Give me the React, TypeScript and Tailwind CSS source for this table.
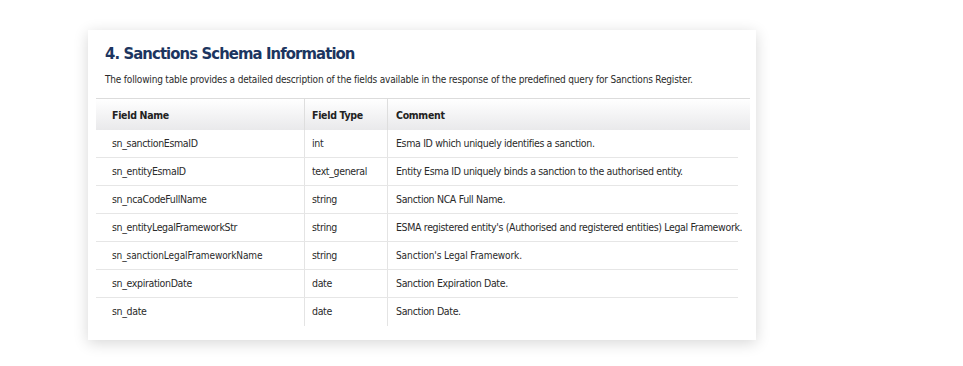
import React from 'react';

type Field = { name: string; type: string; comment: string; small?: boolean };

const FIELDS: Field[] = [
  { name: 'sn_sanctionEsmaID', type: 'int', comment: 'Esma ID which uniquely identifies a sanction.' },
  { name: 'sn_entityEsmaID', type: 'text_general', comment: 'Entity Esma ID uniquely binds a sanction to the authorised entity.' },
  { name: 'sn_ncaCodeFullName', type: 'string', comment: 'Sanction NCA Full Name.' },
  { name: 'sn_entityLegalFrameworkStr', type: 'string', comment: "ESMA registered entity's (Authorised and registered entities) Legal Framework." },
  { name: 'sn_sanctionLegalFrameworkName', type: 'string', comment: "Sanction's Legal Framework.", small: true },
  { name: 'sn_expirationDate', type: 'date', comment: 'Sanction Expiration Date.' },
  { name: 'sn_date', type: 'date', comment: 'Sanction Date.' },
];

const FONT = "font-['DejaVu_Sans_Condensed','DejaVu_Sans',sans-serif]";

export default function App() {
  return (
    <div className={`w-[963px] h-[366px] bg-white pt-[30px] pl-[88px] ${FONT}`}>
      {/* card */}
      <div className="w-[668px] h-[310px] bg-white shadow-[0_3px_14px_rgba(0,0,0,0.16)] pt-[12px]">
        <h2 className="pl-[17px] text-[16.5px] leading-[24px] font-bold tracking-[-0.9px] text-[#1c3560]">
          4. Sanctions Schema Information
        </h2>
        <p className="pl-[17px] mt-[7px] text-[10px] leading-[14px] text-[#2a2a2a] tracking-[-0.18px]">
          The following table provides a detailed description of the fields available in the response of the predefined query for Sanctions Register.
        </p>

        <div className="ml-[8px] mt-[11px] w-[654px]">
          {/* header */}
          <div className="grid grid-cols-[208px_83px_1fr] h-[32px] border-t border-[#dcdcdc] bg-gradient-to-b from-white to-[#e9e9eb] text-[10.5px] font-bold tracking-[-0.3px] text-[#222]">
            <div className="flex items-center pl-[16px] pt-[2px]">Field Name</div>
            <div className="flex items-center pl-[7px] pt-[2px] border-l border-[#dedede]">Field Type</div>
            <div className="flex items-center pl-[8px] pt-[2px] border-l border-[#dedede]">Comment</div>
          </div>

          {/* rows */}
          <div className="w-[642px]">
            {FIELDS.map((f, i) => (
              <div
                key={f.name}
                className={`grid grid-cols-[208px_83px_1fr] h-[28px] text-[10.5px] tracking-[-0.35px] text-[#2a2a2a] whitespace-nowrap ${i < FIELDS.length - 1 ? 'border-b border-[#e6e6e6]' : ''}`}
              >
                <div className={`flex items-center pl-[16px] ${f.small ? 'text-[10px] tracking-[-0.1px]' : ''}`}>{f.name}</div>
                <div className="flex items-center pl-[7px] border-l border-[#e4e4e4]">{f.type}</div>
                <div className={`flex items-center pl-[8px] border-l border-[#e4e4e4] ${f.small ? 'text-[10px] tracking-[-0.1px]' : ''}`}>{f.comment}</div>
              </div>
            ))}
          </div>
        </div>
      </div>
    </div>
  );
}
